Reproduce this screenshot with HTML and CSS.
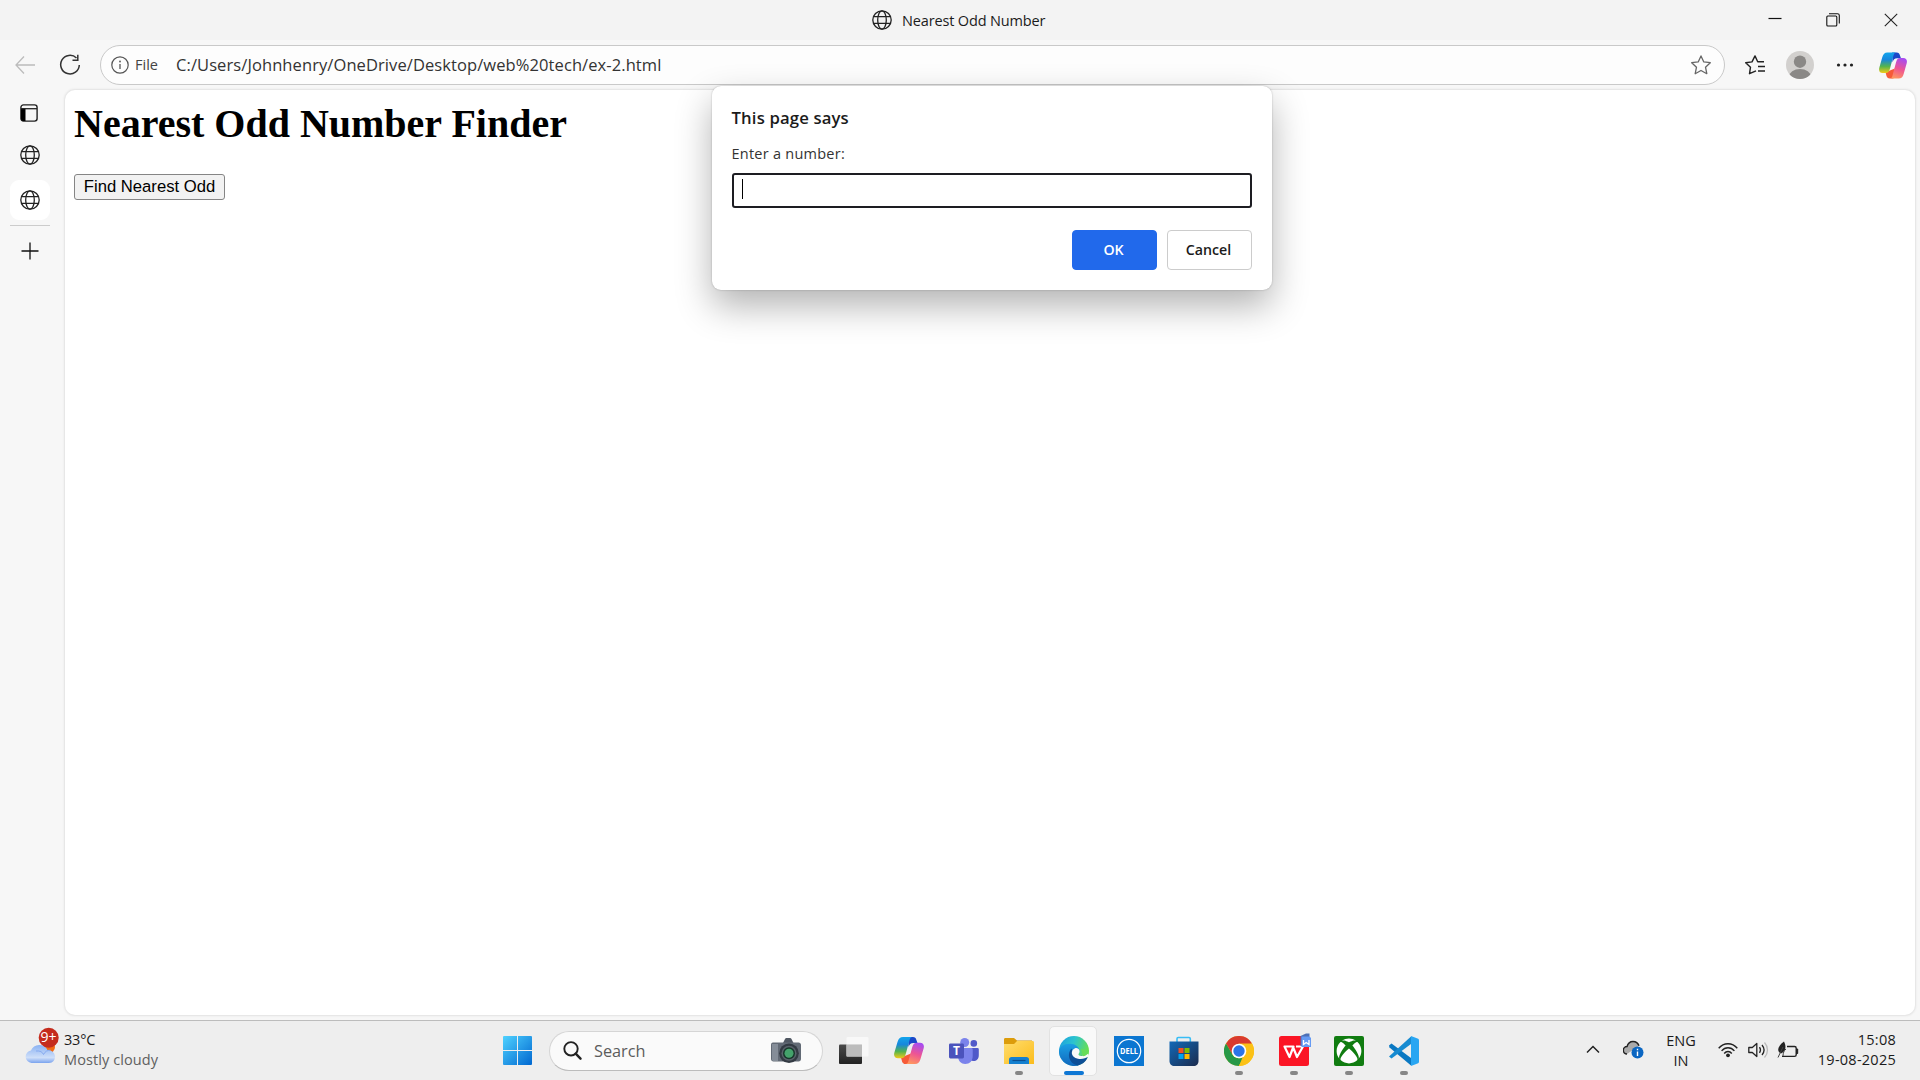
FILE: index.html
```html
<!DOCTYPE html>
<html lang="en">
<head>
<meta charset="utf-8">
<title>Nearest Odd Number</title>
<link rel="stylesheet" href="styles.css">
</head>
<body>
<svg class="defs" width="0" height="0" aria-hidden="true">
  <defs>
    <linearGradient id="cpA" x1="0" y1="0" x2="0" y2="1"><stop offset="0" stop-color="#12a5ec"/><stop offset=".35" stop-color="#1787dd"/><stop offset=".68" stop-color="#55b44d"/><stop offset="1" stop-color="#f4cb16"/></linearGradient>
    <linearGradient id="cpB" x1=".6" y1="0" x2=".3" y2="1"><stop offset="0" stop-color="#a84cf0"/><stop offset=".5" stop-color="#ee5593"/><stop offset="1" stop-color="#ff985e"/></linearGradient>
    <linearGradient id="win" x1="0" y1="0" x2="1" y2="1"><stop offset="0" stop-color="#4fd2ff"/><stop offset="1" stop-color="#0067d0"/></linearGradient>
    <linearGradient id="cloud" x1="0" y1="0" x2="0" y2="1"><stop offset="0" stop-color="#8ab2f3"/><stop offset=".7" stop-color="#cfdff9"/><stop offset="1" stop-color="#7aa3ee"/></linearGradient>
    <linearGradient id="folder" x1="0" y1="0" x2="1" y2="1"><stop offset="0" stop-color="#ffdd6d"/><stop offset="1" stop-color="#fbbc1c"/></linearGradient>
    <linearGradient id="edgeA" x1="0" y1="0" x2="1" y2=".35"><stop offset="0" stop-color="#1b9de0"/><stop offset=".5" stop-color="#2cc3cf"/><stop offset="1" stop-color="#67df52"/></linearGradient>
    <linearGradient id="edgeB" x1="0" y1="0" x2="0" y2="1"><stop offset="0" stop-color="#1aa0e4"/><stop offset="1" stop-color="#1268bd"/></linearGradient>
    <linearGradient id="store" x1="0" y1="0" x2="1" y2="1"><stop offset="0" stop-color="#1169b8"/><stop offset="1" stop-color="#1b2b4d"/></linearGradient>
    <linearGradient id="dark" x1="0" y1="0" x2="0" y2="1"><stop offset="0" stop-color="#4a4a4a"/><stop offset="1" stop-color="#222"/></linearGradient>
    <symbol id="globe" viewBox="0 0 20 20"><g fill="none" stroke="currentColor" stroke-width="1.3"><circle cx="10" cy="10" r="9.2"/><ellipse cx="10" cy="10" rx="4.3" ry="9.2"/><path d="M1.5 6.6h17M1.5 13.4h17"/></g></symbol>
    <symbol id="copilot" viewBox="0 0 30 28" preserveAspectRatio="none">
      <path fill="#1b48c9" d="M14 .5h5c2 0 2.800 1 3.300 2.700L23.500 6.500h-4c-3 0-4 1.500-5 4z"/>
      <path fill="#f65b38" d="M7 21l1 3.700c.6 1.900 1.500 2.800 3.500 2.800h4L17 17z"/>
      <path fill="url(#cpA)" d="M9 .5h9.500c-1.700 0-2.300 1-3 3.200l-3.700 13.500c-.9 3.300-2 4.600-4.800 4.600H4C.8 21.800-.6 19.500.4 16L3.500 5.500C4.500 2 6 .5 9 .5z"/>
      <path fill="url(#cpB)" d="M21 27.500H11.500c1.700 0 2.300-1 3-3.200l3.700-13.500c.9-3.300 2-4.600 4.800-4.600h3c3.200 0 4.600 2.300 3.600 5.800L26.500 22.500c-1 3.500-2.500 5-5.500 5z"/>
    </symbol>
  </defs>
</svg>

<header class="titlebar">
  <div class="window-title"><svg class="i20"><use href="#globe"/></svg><span>Nearest Odd Number</span></div>
  <div class="window-controls">
    <svg width="14" height="14" viewBox="0 0 14 14"><path d="M.5 5.500h13" stroke="#111" stroke-width="1.200"/></svg>
    <svg width="14" height="14" viewBox="0 0 14 14"><g fill="none" stroke="#111" stroke-width="1.100"><rect x=".8" y="3" width="10" height="10" rx="1"/><path d="M3 .7h8.500c1.200 0 1.800.6 1.800 1.800V10.500"/></g></svg>
    <svg width="14" height="14" viewBox="0 0 14 14"><path d="M.8.800l12.400 12.400M13.200.8L.8 13.200" stroke="#222" stroke-width="1.100"/></svg>
  </div>
</header>

<div class="toolbar">
  <svg class="back" width="20" height="20" viewBox="0 0 20 20"><path d="M9 1.500L1 10l8 8.500M1 10h19" fill="none" stroke="#bcbcbc" stroke-width="1.300"/></svg>
  <svg class="reload" width="22" height="22" viewBox="0 0 22 22"><path d="M17.500 4A9.300 9.300 0 1 0 20.300 11M18.800.800V6.200H13.500" fill="none" stroke="#333" stroke-width="1.500"/></svg>
  <div class="address">
    <svg class="info" width="18" height="18" viewBox="0 0 18 18"><circle cx="9" cy="9" r="8.200" fill="none" stroke="#555" stroke-width="1.200"/><path d="M9 8v5" stroke="#555" stroke-width="1.300"/><circle cx="9" cy="5.500" r=".9" fill="#555"/></svg>
    <span class="scheme">File</span>
    <span class="url">C:/Users/Johnhenry/OneDrive/Desktop/web%20tech/ex-2.html</span>
    <svg class="star" width="20" height="20" viewBox="0 0 20 20"><path d="M10 .9l2.800 6 6.500.8-4.800 4.500 1.300 6.500L10 15.500l-5.800 3.200 1.300-6.500L.7 7.700l6.500-.8z" fill="none" stroke="#666" stroke-width="1.300" stroke-linejoin="round"/></svg>
  </div>
  <svg class="favs" width="20" height="20" viewBox="0 0 20 20"><path d="M11 15.800l-6.500 2.900 1-6.500L.7 7.700l6.300-.8L10 .9l2.700 5.800H19M13 11.500h7M13 16h7" fill="none" stroke="#222" stroke-width="1.400" stroke-linejoin="round"/></svg>
  <svg class="avatar" width="28" height="28" viewBox="0 0 28 28"><defs><clipPath id="av"><circle cx="14" cy="14" r="14"/></clipPath></defs><g clip-path="url(#av)"><path fill="#d2d0ce" d="M0 0h28v28H0z"/><circle cx="14" cy="10.700" r="6.200" fill="#8a8886"/><ellipse cx="14" cy="26" rx="11" ry="8" fill="#8a8886"/></g></svg>
  <svg class="more" width="18" height="4" viewBox="0 0 18 4"><g fill="#222"><circle cx="2.500" cy="2" r="1.600"/><circle cx="9" cy="2" r="1.600"/><circle cx="15.500" cy="2" r="1.600"/></g></svg>
  <svg class="cp-tool" width="28" height="27"><use href="#copilot"/></svg>
</div>

<div class="main">
  <nav class="rail">
    <svg class="tabs-icon" width="18" height="18" viewBox="0 0 18 18"><rect x=".9" y=".9" width="16.200" height="16.200" rx="2.500" fill="none" stroke="#222" stroke-width="1.400"/><path d="M1 4.500h4.500V17H3a2 2 0 0 1-2-2z"/><path d="M1 4.700h16" stroke="#222" stroke-width="1.300"/></svg>
    <svg class="i20"><use href="#globe"/></svg>
    <div class="tab-active"><svg class="i20"><use href="#globe"/></svg></div>
    <div class="rail-line"></div>
    <svg class="plus" width="18" height="18" viewBox="0 0 18 18"><path d="M9 .5v17M.5 9h17" stroke="#111" stroke-width="1.300"/></svg>
  </nav>
  <main class="page">
    <h1>Nearest Odd Number Finder</h1>
    <button class="find">Find Nearest Odd</button>
  </main>
</div>

<footer class="taskbar">
  <div class="weather">
    <svg width="36" height="40" viewBox="0 0 36 40"><circle cx="24" cy="20" r="6" fill="#f26a13"/><path d="M6.500 36a6.300 6.300 0 0 1-.6-12.500A9.200 9.200 0 0 1 22.500 23 7 7 0 0 1 30 29c.2 4-2 7-6 7z" fill="url(#cloud)"/><path d="M11 24c4-.5 6.500 1 7.500 3.500 1.500-3 4-4.500 7-4.300" fill="none" stroke="#86aaf0" stroke-width="1"/><circle cx="23.700" cy="10.700" r="10" fill="#c42b1c"/><text x="23.500" y="15.200" text-anchor="middle" class="badge-text">9+</text></svg>
    <div class="weather-text"><span>33°C</span><span class="dim">Mostly cloudy</span></div>
  </div>
  <div class="center">
    <svg width="29" height="29" viewBox="0 0 29 29"><path fill="url(#win)" d="M1 0h13v14H0V1a1 1 0 0 1 1-1zM15 0h13a1 1 0 0 1 1 1v13H15zM0 15h14v14H1a1 1 0 0 1-1-1zM15 15h14v13a1 1 0 0 1-1 1H15z"/></svg>
    <div class="search">
      <svg width="19" height="19" viewBox="0 0 19 19"><circle cx="8" cy="7.800" r="6.700" fill="none" stroke="#222" stroke-width="1.900"/><path d="M12.700 12.700l4.800 5" stroke="#222" stroke-width="2.400" stroke-linecap="round"/></svg>
      <span>Search</span>
      <svg class="camera" width="30" height="26" viewBox="0 0 30 26"><path fill="#505762" d="M12 5l2-4c.4-.7 1-1 2-1h2.500c1 0 1.500.3 2 1l2 4z"/><path fill="#626a75" d="M2 4.500h25.500c1.500 0 2.500 1 2.500 2.500v14c0 1.500-1 2.500-2.500 2.500h-25C1 23.500 0 22.500 0 21V7c0-1.500.5-2.500 2-2.500z"/><path fill="#858d98" d="M1 6h6v17H2l-1-1z"/><circle cx="18" cy="15.300" r="9.800" fill="#333a43"/><circle cx="18" cy="15.300" r="7.500" fill="#59616a"/><circle cx="18" cy="15.300" r="6" fill="#17372b"/><circle cx="18" cy="15.300" r="4.500" fill="#44a26b"/></svg>
    </div>
    <div class="apps">
      <div class="app"><svg class="i30" viewBox="0 0 30 30"><rect y="8.500" width="23" height="19.500" rx="1" fill="url(#dark)"/><rect x="7.500" y="1" width="22" height="19.500" rx="1" fill="#f8f8f8" fill-opacity=".9"/><path d="M7.500 8.500H23v12H7.500z" fill="#bcbcbc"/></svg></div>
      <div class="app"><svg class="i30" viewBox="0 0 30 30"><use href="#copilot" y=".5" width="30" height="28"/></svg></div>
      <div class="app"><svg class="i30" viewBox="0 0 30 30"><circle cx="24.800" cy="7.400" r="3.300" fill="#5059c9"/><path fill="#5059c9" d="M21 12h7.500a1.300 1.300 0 0 1 1.300 1.300V19c0 4-2.300 6-5.300 6s-4-2-4-2z"/><circle cx="15.700" cy="6.500" r="4.500" fill="#7b83eb"/><path fill="#7b83eb" d="M10 12h12.300a1.400 1.400 0 0 1 1.400 1.400V20c0 5-3 8-7.500 8-4 0-7-3-7-7z"/><rect y="7.500" width="15" height="15" rx="1.400" fill="#4b53bc"/><text x="7.500" y="19.200" text-anchor="middle" class="teams-t">T</text></svg></div>
      <div class="app"><svg class="i30" viewBox="0 0 30 30"><path fill="#dc9c0b" d="M1.500 2h8.500l3 2.500H28V12H0V3.500C0 2.500.5 2 1.500 2z"/><path fill="url(#folder)" d="M0 8h10l3-3h15.500c1 0 1.500.5 1.500 1.500V28H0z"/><path fill="#1480d0" d="M7.500 21h15c1.500 0 2.500 1 2.500 2.500V28H5v-4.500C5 22 6 21 7.500 21z"/><path d="M8.500 24.500h13" stroke="#0b4f91" stroke-width="1.200"/></svg><i class="dot"></i></div>
      <div class="app active"><svg class="i30" viewBox="0 0 30 30"><circle cx="15" cy="15" r="15" fill="url(#edgeA)"/><path fill="url(#edgeB)" d="M0 16C0 10.500 5 7.700 10.500 7.700c6 0 10 3.300 10 7.300L14 20l7 8.700A15 15 0 0 1 0 16z"/><path fill="#0e4f97" d="M12.500 12.500C8 17 9 27 18.500 29.500c4.500-1 8-3.500 10-7.800l-1-2L15 20z"/><path fill="#f9f9f9" d="M16.500 12C11 14 11.500 21.300 19 22.700c4 .7 7.500-.3 10.500-2.200l.5-1.700-2-1c-3.500 3-8.500 2.500-8.500.7 0-1.200 1.400-1.700 1-3.800-.4-2-2-2.900-4-2.700z"/><path fill="#67dc58" d="M24 20.300c3.200-.3 5.500-2.500 5.900-6L22 13z"/></svg><i class="dot"></i></div>
      <div class="app"><svg class="i30" viewBox="0 0 30 30"><path fill="#0b76d1" d="M0 0h30v30H0z"/><circle cx="15" cy="15" r="11.700" fill="none" stroke="#fff" stroke-width="1.200"/><text x="15" y="18" text-anchor="middle" class="dell-t" textLength="18" lengthAdjust="spacingAndGlyphs">DELL</text></svg></div>
      <div class="app"><svg class="i30" viewBox="0 0 30 30"><path d="M8 7V2.800C8 2 8.300 1.500 9.200 1.500H20c.9 0 1.300.5 1.300 1.300V7" fill="none" stroke="#38bdf5" stroke-width="1.600"/><path fill="url(#store)" d="M.5 5.500h29V25c0 3-2 5-5 5h-19c-3 0-5-2-5-5z"/><path fill="#f25022" d="M9.500 12h5v5h-5z"/><path fill="#7fba00" d="M15.500 12h5v5h-5z"/><path fill="#00a4ef" d="M9.500 18h5v5h-5z"/><path fill="#ffb900" d="M15.500 18h5v5h-5z"/></svg></div>
      <div class="app"><svg class="i30" viewBox="0 0 30 30"><circle cx="15" cy="15" r="15" fill="#fbc116"/><path fill="#d93a2f" d="M2 7.500A15 15 0 0 1 28 7.500H15L8.500 18.700z"/><path fill="#279847" d="M2 7.500L8.500 18.700c2 3.300 7 4.500 10 2.700L15 30A15 15 0 0 1 2 7.500z"/><path fill="#fbc116" d="M28 7.500A15 15 0 0 1 14.700 30l6.800-11.300L22 10z"/><circle cx="15" cy="15" r="7.300" fill="#fff"/><circle cx="15" cy="15" r="5.700" fill="#2b74e8"/></svg><i class="dot"></i></div>
      <div class="app"><svg class="i30" viewBox="0 0 30 30" overflow="visible"><rect width="30" height="30" rx="2.500" fill="#fb1525"/><path d="M5.500 10.500H14.500L10.500 21zM14 11l4 10 6-10.500h-7" fill="none" stroke="#fff" stroke-width="2.200" stroke-linejoin="round"/><path fill="#4d70b6" d="M21.500 0L27-2.500h3.500V10h-9z"/><path fill="#659af3" d="M22.500.5h8l1.500 1.500v9h-9.500z"/><path d="M24.500 4v4.500l2.700-2 2.800 2V4" fill="none" stroke="#fff" stroke-width="1.300"/></svg><i class="dot"></i></div>
      <div class="app"><svg class="i30" viewBox="0 0 30 30"><rect width="30" height="30" rx="2" fill="#107c10"/><path transform="translate(2.600 2.600) scale(1.033)" fill="#fff" d="M4.102 21.033C6.211 22.881 8.977 24 12 24c3.026 0 5.789-1.119 7.902-2.967 1.877-1.912-4.316-8.709-7.902-11.417-3.582 2.708-9.779 9.505-7.898 11.417zm11.160-14.406c2.500 2.961 7.484 10.313 6.076 12.912C23.002 17.480 24 14.861 24 12.004c0-3.340-1.365-6.362-3.570-8.536 0 0-.027-.022-.082-.042-.063-.022-.152-.045-.281-.045-.592 0-1.985.434-4.805 3.246zM3.654 3.426c-.057.020-.082.041-.086.042C1.365 5.642 0 8.664 0 12.004c0 2.854.998 5.473 2.661 7.533-1.401-2.605 3.579-9.951 6.080-12.910-2.820-2.813-4.216-3.245-4.806-3.245-.131 0-.223.021-.281.046zM12 3.551S9.055 1.828 6.755 1.746c-.903-.033-1.454.295-1.521.339C7.379.646 9.659 0 11.984 0H12c2.334 0 4.605.646 6.766 2.085-.068-.046-.615-.372-1.520-.339C14.946 1.828 12 3.545 12 3.545z"/></svg><i class="dot"></i></div>
      <div class="app"><svg class="i30" viewBox="0 0 30 30"><path fill="#0a78c2" d="M0 9.500L2.500 7.500 22 22v7.500L.5 11.500z"/><path fill="#178bd1" d="M0 20.500L22 .5V8L2.500 22.500z"/><path fill="#29a6f2" d="M22 0l6.500 2.500c1 .4 1.500 1 1.500 2v21c0 1-.5 1.600-1.500 2L22 30z"/></svg><i class="dot"></i></div>
    </div>
  </div>
  <div class="tray">
    <svg class="chev" width="14" height="9" viewBox="0 0 14 9"><path d="M1 7.500l6-6 6 6" fill="none" stroke="#222" stroke-width="1.500"/></svg>
    <svg class="onedrive" width="21" height="19" viewBox="0 0 21 19"><path d="M4 14a3.700 3.700 0 0 1 0-7.400C5 3 7.500 1.500 10 1.500c3 0 5 1.500 6 4.300" fill="#aaa" stroke="#222" stroke-width="1.500"/><circle cx="14.500" cy="12.500" r="6" fill="#0a66c2"/><path d="M14.500 11.500V16M14.500 8.800v1.500" stroke="#fff" stroke-width="1.400"/></svg>
    <div class="lang"><span>ENG</span><span>IN</span></div>
    <svg class="wifi" width="20" height="16" viewBox="0 0 20 16"><g fill="none" stroke="#222" stroke-width="1.400"><path d="M.7 6.200c5-6 13.600-6 18.600 0"/><path d="M3.600 8.900c3.600-4.200 9.200-4.200 12.800 0"/><path d="M6.200 11.500c2.200-2.600 5.400-2.600 7.600 0"/></g><circle cx="10" cy="13.300" r="1.900" fill="#222"/></svg>
    <svg class="vol" width="21" height="18" viewBox="0 0 21 18"><g fill="none" stroke="#222" stroke-width="1.300" stroke-linejoin="round"><path d="M.8 6.500h3.500l4.500-4v13l-4.500-4H.8z"/><path d="M11.500 6.200c1.200 1.700 1.200 3.900 0 5.600M14 4c2.500 3 2.500 7 0 10"/><path stroke="#bbb" d="M16.500 1.500c4 4.500 4 10.500 0 15"/></g></svg>
    <svg class="bat" width="22" height="18" viewBox="0 0 22 18"><path d="M10 5.500h7.500c1 0 1.700.7 1.700 1.700v6.500c0 1-.7 1.700-1.700 1.700H5" fill="none" stroke="#222" stroke-width="1.400"/><path d="M19.500 8h1.200v4.500h-1.200z" stroke="#222"/><path d="M7 .5c2.500 5 2 10-3 12C-.5 11 .5 5 7 .5z" fill="#222"/><path d="M1 16.500L6 6M9 8c-2 1.500-3 4-3 7" stroke="#444" fill="none"/></svg>
    <div class="clock"><span>15:08</span><span>19-08-2025</span></div>
  </div>
</footer>

<div class="dialog">
  <div class="dlg-title">This page says</div>
  <div class="dlg-label">Enter a number:</div>
  <div class="dlg-input"><i class="caret"></i></div>
  <div class="dlg-actions"><div class="btn primary">OK</div><div class="btn">Cancel</div></div>
</div>
</body>
</html>
```
FILE: styles.css
```css
* { box-sizing: border-box; }
body {
  margin: 0; width: 1920px; height: 1080px; overflow: hidden;
  display: flex; flex-direction: column;
  background: #f7f7f7; color: #1b1b1b;
  font-family: "Open Sans", "Noto Sans", sans-serif; font-size: 15px;
}
svg { display: block; flex: none; }
.defs { position: absolute; }
.i20 { width: 20px; height: 20px; color: #222; }
.i30 { width: 30px; height: 30px; }

.titlebar { height: 40px; flex: none; background: #f3f3f3; display: flex; align-items: center; }
.window-title { display: flex; align-items: center; gap: 10px; padding-left: 872px; flex: 1; font-size: 14.5px; letter-spacing: -0.15px; }
.window-controls { display: flex; gap: 44px; padding-right: 22px; }

.toolbar { height: 50px; flex: none; display: flex; align-items: center; padding: 0 13px 0 15px; }
.reload { margin-left: 24px; }
.address {
  margin-left: 19px; width: 1625px; height: 40px; flex: none;
  border: 1px solid #c9c9c9; border-radius: 20px; background: #fdfdfd;
  display: flex; align-items: center; padding: 0 13px 0 10px;
}
.scheme { margin-left: 6px; width: 41px; padding-bottom: 1px; font-size: 14.5px; color: #444; }
.url { flex: 1; padding-bottom: 2px; font-size: 16.5px; letter-spacing: 0.09px; color: #333; white-space: nowrap; }
.favs { margin-left: 20px; }
.avatar { margin-left: 21px; }
.more { margin-left: 21.5px; }
.cp-tool { margin-left: 25.5px; }

.main { flex: 1; min-height: 0; display: flex; padding: 0 5px 5px 0; }
.rail { width: 65px; flex: none; display: flex; flex-direction: column; align-items: center; padding: 14px 5px 0 0; }
.tabs-icon { margin: 0 2px 23px 0; }
.tab-active { margin-top: 15px; width: 40px; height: 40px; border-radius: 9px; background: #fff; display: flex; align-items: center; justify-content: center; }
.rail-line { width: 40px; height: 1px; margin: 5px 0 16px; background: #ccc; }
.plus { margin-right: 1px; }
.page { flex: 1; background: #fff; border-radius: 10px; padding: 11px 9px; box-shadow: 0 0 2px 1px #e2e2e2; }
.page h1 { margin: 0 0 27px; font: bold 40px/46px "Liberation Serif", serif; color: #000; }
.find {
  display: block; width: 151px; height: 26px; padding: 0 0 1px; border: 1px solid #858585; border-radius: 3px;
  background: #f2f2f2; font: 16.67px "Liberation Sans", sans-serif; color: #000; white-space: nowrap;
}

.taskbar { height: 60px; flex: none; background: #eee; border-top: 1px solid #bcbcbc; display: grid; grid-template-columns: 503px auto 1fr; align-items: center; }
.weather { display: flex; gap: 3px; padding-left: 25px; align-self: start; padding-top: 6px; }
.weather-text { display: flex; flex-direction: column; line-height: 20px; padding-top: 3px; font-size: 14.5px; letter-spacing: -0.2px; }
.dim { color: #606060; letter-spacing: 0.1px; }
.badge-text { font-size: 14px; fill: #fff; }
.center { display: flex; align-items: center; height: 58px; }
.search { margin-left: 17px; width: 274px; height: 40px; border: 1px solid #d5d5d5; border-bottom-color: #bcbcbc; border-radius: 20px; background: #fafafa; display: flex; align-items: center; padding: 0 21px 0 13px; }
.search span { flex: 1; margin-left: 12px; font-size: 16.3px; color: #5c5c5c; }
.apps { display: flex; margin-left: 3px; }
.app { width: 55px; height: 50px; display: flex; align-items: center; justify-content: center; position: relative; }
.active::before { content: ""; position: absolute; inset: 0 4px 0 3px; background: #f9f9f9; border: 1px solid #e2e2e2; border-radius: 5px; }
.app svg { position: relative; }
.dot { position: absolute; bottom: 1px; left: 24px; width: 8px; height: 4px; border-radius: 2px; background: #868686; }
.active .dot { left: 18px; width: 20px; background: #0f77d4; }
.teams-t { font: bold 12px "Open Sans", sans-serif; fill: #fff; }
.dell-t { font: bold 8px "Open Sans", sans-serif; fill: #fff; }
.tray { display: flex; align-items: center; justify-content: flex-end; padding: 0 24px 2px 0; font-size: 14.5px; }
.onedrive { margin-left: 23px; }
.lang { width: 40px; margin-left: 17px; margin-top: 3px; display: flex; flex-direction: column; text-align: center; line-height: 20px; }
.wifi { margin-left: 17px; }
.vol { margin-left: 10px; }
.bat { margin-left: 8px; }
.clock { width: 97px; display: flex; flex-direction: column; text-align: right; line-height: 20px; letter-spacing: 0.25px; }

.dialog {
  position: absolute; left: 711.5px; top: 86px; width: 560px; height: 204px; padding: 20px;
  background: #fff; border-radius: 9px; box-shadow: 0 0 2px rgba(0,0,0,.25), 0 16px 36px rgba(0,0,0,.3);
}
.dlg-title { font-size: 16.7px; line-height: 24px; font-weight: 600; letter-spacing: 0.15px; }
.dlg-label { margin-top: 14px; font-size: 14.5px; line-height: 20px; letter-spacing: 0.25px; color: #333; }
.dlg-input { margin-top: 9px; height: 35px; border: 2px solid #1d1d22; border-radius: 3px; padding: 4px 8px; }
.caret { display: block; width: 1px; height: 20px; background: #000; }
.dlg-actions { display: flex; justify-content: flex-end; gap: 10px; margin-top: 22px; }
.btn { width: 85px; height: 40px; padding: 0 1px 2px 0; border: 1px solid #ccc; border-radius: 4px; display: flex; align-items: center; justify-content: center; font-size: 14.2px; font-weight: 600; }
.primary { background: #2169eb; border-color: #2169eb; color: #fff; }
```
